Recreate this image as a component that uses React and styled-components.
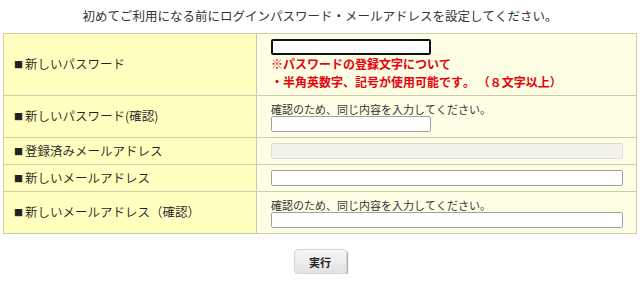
import React from "react";
import styled, { createGlobalStyle } from "styled-components";

const Global = createGlobalStyle`
  html, body { margin: 0; padding: 0; background: #fff; }
  body {
    font-family: "Noto Sans CJK JP", "Noto Sans", sans-serif;
    color: #333;
    text-spacing-trim: space-all;
    font-kerning: none;
    font-feature-settings: "halt" 0, "chws" 0, "palt" 0, "kern" 0;
  }
`;

const Page = styled.div`
  width: 640px;
  padding-top: 7px;
  display: flex;
  flex-direction: column;
  align-items: center;
`;

const Title = styled.p`
  margin: 0 0 8px;
  font-size: 12.5px;
  line-height: 18px;
  color: #333;
`;

const Table = styled.table`
  width: 634px;
  border-collapse: collapse;
  border: 1px solid #c8c4a0;
`;

const Row = styled.tr`
  height: ${(p) => p.$h}px;
`;

const Label = styled.th`
  width: 253px;
  box-sizing: border-box;
  background: #ffffbf;
  border: 1px solid #d0ccaa;
  text-align: left;
  font-weight: 350;
  font-size: 12.5px;
  padding: 0 0 2px 10px;
  color: #222;
`;

const Bullet = styled.span`
  font-size: 9px;
  margin-right: 2px;
  vertical-align: 1px;
`;

const Cell = styled.td`
  background: #ffffe6;
  border: 1px solid #d0ccaa;
  padding: 0 13px 0 14px;
  vertical-align: middle;
`;

const Note = styled.div`
  font-size: 11px;
  line-height: 14px;
  color: #333;
`;

const Warn = styled.div`
  font-size: 12px;
  line-height: 18px;
  font-weight: bold;
  color: #e8000b;
  white-space: pre;
`;

const Input = styled.input`
  display: block;
  box-sizing: border-box;
  width: ${(p) => (p.$short ? "160px" : "100%")};
  height: 16px;
  margin: 0;
  padding: 0 3px;
  border: ${(p) => (p.$focus ? "2px solid #111" : "1px solid #a0a0a0")};
  border-radius: 2px;
  background: ${(p) => (p.disabled ? "#f2f2ea" : "#fff")};
  ${(p) => (p.disabled ? "border-color: #dcdcd2;" : "")}
  font-size: 12px;
  outline: none;
`;

const Actions = styled.div`
  margin-top: 15px;
  display: flex;
  justify-content: center;
  width: 640px;
`;

const Button = styled.button`
  width: 53px;
  height: 25px;
  border: 1px solid #d4d4d4;
  border-radius: 4px;
  background: linear-gradient(#f7f7f7, #e2e2e2);
  box-shadow: 1px 1px 1px #a8a8a8;
  font-family: "Noto Sans CJK JP", sans-serif;
  font-weight: bold;
  font-size: 11px;
  color: #222;
  padding: 0;
`;

const rows = [
  { h: 62, label: "新しいパスワード" },
  { h: 42, label: "新しいパスワード(確認)" },
  { h: 27, label: "登録済みメールアドレス" },
  { h: 27, label: "新しいメールアドレス" },
  { h: 42, label: "新しいメールアドレス（確認）" },
];

function Lbl({ children }) {
  return (
    <Label>
      <Bullet>■</Bullet>
      {children}
    </Label>
  );
}

export default function App() {
  return (
    <>
      <Global />
      <Page>
        <Title>初めてご利用になる前にログインパスワード・メールアドレスを設定してください。</Title>
        <Table>
          <tbody>
            <Row $h={rows[0].h}>
              <Lbl>{rows[0].label}</Lbl>
              <Cell>
                <Input $short $focus type="password" />
                <Warn>※パスワードの登録文字について</Warn>
                <Warn>・半角英数字、記号が使用可能です。 （８文字以上）</Warn>
              </Cell>
            </Row>
            <Row $h={rows[1].h}>
              <Lbl>{rows[1].label}</Lbl>
              <Cell>
                <Note>確認のため、同じ内容を入力してください。</Note>
                <Input $short type="password" />
              </Cell>
            </Row>
            <Row $h={rows[2].h}>
              <Lbl>{rows[2].label}</Lbl>
              <Cell>
                <Input disabled />
              </Cell>
            </Row>
            <Row $h={rows[3].h}>
              <Lbl>{rows[3].label}</Lbl>
              <Cell>
                <Input />
              </Cell>
            </Row>
            <Row $h={rows[4].h}>
              <Lbl>{rows[4].label}</Lbl>
              <Cell>
                <Note>確認のため、同じ内容を入力してください。</Note>
                <Input />
              </Cell>
            </Row>
          </tbody>
        </Table>
        <Actions>
          <Button>実行</Button>
        </Actions>
      </Page>
    </>
  );
}
